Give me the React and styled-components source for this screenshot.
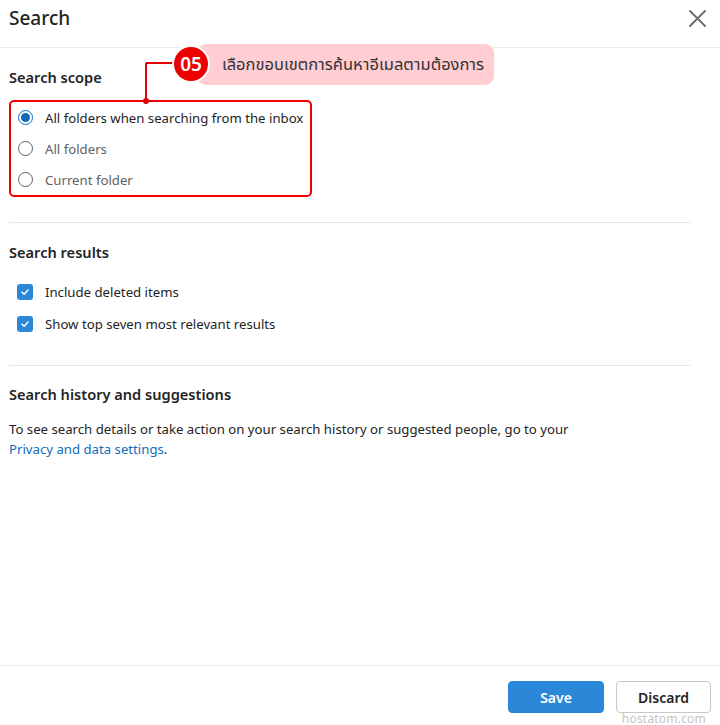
import React from "react";
import styled, { createGlobalStyle } from "styled-components";

const Global = createGlobalStyle`
  html, body { margin: 0; padding: 0; background: #fff; }
  body { font-family: "Noto Sans", "Noto Sans Thai", "DejaVu Sans", sans-serif; color: #242424; }
  * { box-sizing: border-box; }
`;

const Page = styled.div`
  position: relative;
  width: 720px;
  height: 725px;
  display: flex;
  flex-direction: column;
  overflow: hidden;
`;

const Header = styled.header`
  height: 48px;
  border-bottom: 1px solid #ebebeb;
  display: flex;
  align-items: flex-start;
  justify-content: space-between;
  padding: 4px 14px 0 9px;
`;

const Title = styled.h1`
  margin: 0;
  font-size: 19px;
  font-weight: 500;
  line-height: 28px;
  color: #242424;
`;

const CloseButton = styled.button`
  border: 0;
  background: none;
  padding: 0;
  margin-top: 5px;
  width: 18px;
  height: 18px;
  display: flex;
  align-items: center;
  justify-content: center;
  color: #616161;
`;

const Body = styled.main`
  flex: 1;
  padding: 19px 30px 0 9px;
`;

const SectionTitle = styled.h2`
  margin: 0;
  font-size: 14.6px;
  font-weight: 600;
  line-height: 20px;
  color: #242424;
`;

const RadioGroup = styled.div`
  margin-top: 13px;
  width: 303px;
  height: 97px;
  border: 2px solid #f00000;
  border-radius: 5px;
  padding: 0 0 0 7px;
  display: flex;
  flex-direction: column;
  justify-content: center;
`;

const OptionRow = styled.label`
  height: ${(p) => p.$h || 32}px;
  display: flex;
  align-items: center;
  gap: ${(p) => p.$gap || 12}px;
  font-size: 13.2px;
  white-space: nowrap;
  color: ${(p) => (p.$muted ? "#616161" : "#242424")};
`;

const RadioCircle = styled.span`
  width: 15px;
  height: 15px;
  border-radius: 50%;
  border: 1px solid ${(p) => (p.$checked ? "#0f6cbd" : "#616161")};
  display: flex;
  align-items: center;
  justify-content: center;
  flex-shrink: 0;
  &::after {
    content: "";
    display: ${(p) => (p.$checked ? "block" : "none")};
    width: 9px;
    height: 9px;
    border-radius: 50%;
    background: #0f6cbd;
  }
`;

const Divider = styled.hr`
  margin: 25px 0 ${(p) => p.$bottom || 19}px 0;
  border: 0;
  border-top: 1px solid #e6e6e6;
  height: 0;
`;

const CheckList = styled.div`
  margin-top: 14px;
  display: flex;
  flex-direction: column;
`;

const CheckBox = styled.span`
  width: 16px;
  height: 16px;
  border-radius: 3px;
  background: #2b88d8;
  display: flex;
  align-items: center;
  justify-content: center;
  flex-shrink: 0;
  margin-left: 8px;
`;

const Paragraph = styled.p`
  margin: 15px 0 0;
  font-size: 13.2px;
  line-height: 20px;
  color: #242424;
`;

const Link = styled.a`
  color: #0f6cbd;
  text-decoration: none;
`;

const Footer = styled.footer`
  height: 60px;
  border-top: 1px solid #ebebeb;
  display: flex;
  justify-content: flex-end;
  align-items: flex-start;
  gap: 12px;
  padding: 15px 9px 0 0;
`;

const Button = styled.button`
  width: ${(p) => (p.$primary ? 96 : 95)}px;
  height: 32px;
  border-radius: 4px;
  font-family: inherit;
  font-size: 14px;
  font-weight: 600;
  cursor: pointer;
  background: ${(p) => (p.$primary ? "#2b88d8" : "#fff")};
  color: ${(p) => (p.$primary ? "#fff" : "#242424")};
  border: 1px solid ${(p) => (p.$primary ? "#2b88d8" : "#c8c8c8")};
`;

const Watermark = styled.div`
  position: absolute;
  right: 14px;
  bottom: -2px;
  font-size: 12px;
  letter-spacing: 0.2px;
  line-height: 16px;
  color: #c4c4c4;
`;

const Callout = styled.div`
  position: absolute;
  left: 197px;
  top: 44px;
  width: 297px;
  height: 41px;
  border-radius: 9px;
  background: #ffcdd2;
  display: flex;
  align-items: center;
  padding-left: 25px;
  font-family: "Noto Sans Thai", "Noto Sans", "DejaVu Sans", sans-serif;
  font-size: 16.5px;
  white-space: nowrap;
  color: #333;
`;

const Badge = styled.div`
  position: absolute;
  left: 172px;
  top: 45px;
  width: 38px;
  height: 38px;
  border-radius: 50%;
  background: #ee0000;
  border: 2px solid #fff;
  color: #fff;
  font-size: 19px;
  font-weight: 600;
  display: flex;
  align-items: center;
  justify-content: center;
`;

const Leader = styled.svg`
  position: absolute;
  left: 140px;
  top: 58px;
`;

function Radio({ checked, label, muted }) {
  return (
    <OptionRow $muted={muted}>
      <RadioCircle $checked={checked} />
      {label}
    </OptionRow>
  );
}

function Check({ label }) {
  return (
    <OptionRow $h={32} $gap={12}>
      <CheckBox>
        <svg width="10" height="10" viewBox="0 0 10 10">
          <path d="M2 5.2 L4.1 7.2 L8 3" fill="none" stroke="#fff" strokeWidth="1.5" strokeLinecap="round" strokeLinejoin="round" />
        </svg>
      </CheckBox>
      {label}
    </OptionRow>
  );
}

export default function App() {
  return (
    <>
      <Global />
      <Page>
        <Header>
          <Title>Search</Title>
          <CloseButton aria-label="Close">
            <svg width="17" height="17" viewBox="0 0 17 17">
              <path d="M1 1 L16 16 M16 1 L1 16" stroke="#6b6b6b" strokeWidth="1.8" strokeLinecap="round" />
            </svg>
          </CloseButton>
        </Header>
        <Body>
          <SectionTitle>Search scope</SectionTitle>
          <RadioGroup>
            <Radio checked label="All folders when searching from the inbox" />
            <Radio muted label="All folders" />
            <Radio muted label="Current folder" />
          </RadioGroup>
          <Divider />
          <SectionTitle>Search results</SectionTitle>
          <CheckList>
            <Check label="Include deleted items" />
            <Check label="Show top seven most relevant results" />
          </CheckList>
          <Divider $bottom={18} />
          <SectionTitle>Search history and suggestions</SectionTitle>
          <Paragraph>
            To see search details or take action on your search history or suggested people, go to your
            <br />
            <Link href="#">Privacy and data settings</Link>.
          </Paragraph>
        </Body>
        <Footer>
          <Button $primary>Save</Button>
          <Button>Discard</Button>
        </Footer>
        <Callout>เลือกขอบเขตการค้นหาอีเมลตามต้องการ</Callout>
        <Leader width="40" height="50" viewBox="0 0 40 50">
          <path d="M6 5 H36 M6 5 V42" fill="none" stroke="#e00000" strokeWidth="2" />
          <circle cx="6" cy="43" r="3" fill="#e00000" />
        </Leader>
        <Badge>05</Badge>
        <Watermark>hostatom.com</Watermark>
      </Page>
    </>
  );
}
